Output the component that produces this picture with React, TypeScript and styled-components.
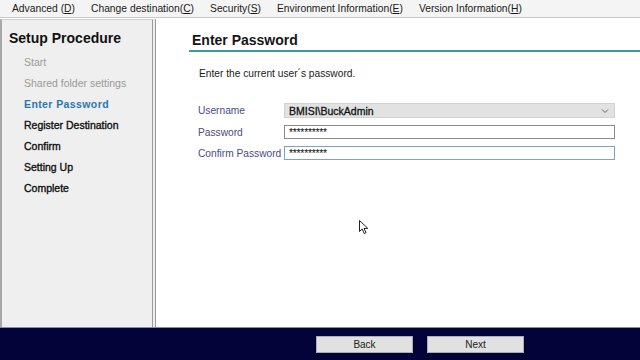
import styled, { createGlobalStyle } from 'styled-components';

const GlobalStyle = createGlobalStyle`
    html, body {
        margin: 0;
        padding: 0;
        background: #ffffff;
    }
    * {
        box-sizing: border-box;
    }
`;

const Window = styled.div`
    width: 640px;
    height: 360px;
    display: flex;
    flex-direction: column;
    font-family: 'Liberation Sans', Arial, sans-serif;
    overflow: hidden;
    position: relative;
    background: #ffffff;
`;

const MenuBar = styled.div`
    height: 18px;
    display: flex;
    align-items: center;
    background: #f4f4f4;
    border-bottom: 1px solid #c9c9c9;
    padding-left: 12px;
    gap: 16px;
    font-size: 10.3px;
    color: #1a1a1a;
`;

const MenuItem = styled.span`
    white-space: nowrap;
    u {
        text-decoration: underline;
    }
`;

const Body = styled.div`
    flex: 1;
    display: flex;
    padding-top: 1px;
    min-height: 0;
`;

const Sidebar = styled.div`
    width: 156px;
    background: #efefef;
    border-left: 2px solid #a8a8a8;
    border-top: 1px solid #d0d0d0;
    border-right: 4px double #9c9c9c;
    padding: 10px 0 0 7px;
    display: flex;
    flex-direction: column;
`;

const SideTitle = styled.div`
    font-size: 14px;
    line-height: 16px;
    font-weight: bold;
    color: #111;
    margin-bottom: 10px;
`;

const StepList = styled.ul`
    list-style: none;
    margin: 0;
    padding: 0 0 0 15px;
    display: flex;
    flex-direction: column;
    gap: 9px;
`;

const Step = styled.li<{ $state: 'done' | 'active' | 'todo' }>`
    font-size: 10.5px;
    line-height: 12px;
    white-space: nowrap;
    font-weight: ${(p) => (p.$state === 'active' ? 'bold' : 'normal')};
    letter-spacing: ${(p) => (p.$state === 'active' ? '0.4px' : '0')};
    -webkit-text-stroke: ${(p) => (p.$state === 'todo' ? '0.35px #111' : '0')};
    color: ${(p) => (p.$state === 'done' ? '#9a9a9a' : p.$state === 'active' ? '#2a78ad' : '#111')};
`;

const Main = styled.div`
    flex: 1;
    background: #ffffff;
    padding-top: 13px;
    display: flex;
    flex-direction: column;
`;

const MainHeader = styled.div`
    margin-left: 33px;
    padding: 0 0 2px 3px;
    border-bottom: 2px solid #3c9aa6;
    font-size: 14px;
    line-height: 16px;
    font-weight: bold;
    color: #151515;
`;

const Intro = styled.div`
    margin: 16px 0 0 43px;
    font-size: 10.2px;
    line-height: 12px;
    color: #1a1a1a;
`;

const Form = styled.div`
    margin: 23px 0 0 42px;
    display: grid;
    grid-template-columns: 86px 331px;
    row-gap: 7px;
    align-items: center;
`;

const Label = styled.label`
    font-size: 10.2px;
    color: #4b4b86;
`;

const Field = styled.div<{ $kind: 'select' | 'input' | 'focus' }>`
    height: ${(p) => (p.$kind === 'select' ? '15px' : '14px')};
    display: flex;
    align-items: center;
    justify-content: space-between;
    padding: 0 5px 0 4px;
    font-size: 10.5px;
    color: #111;
    -webkit-text-stroke: ${(p) => (p.$kind === 'select' ? '0.3px #111' : '0')};
    background: ${(p) => (p.$kind === 'select' ? '#e2e2e2' : '#ffffff')};
    border: 1px solid
        ${(p) => (p.$kind === 'select' ? '#d2d2d2' : p.$kind === 'focus' ? '#7aa3cc' : '#8a8a8a')};
    letter-spacing: ${(p) => (p.$kind === 'select' ? '0' : '-0.3px')};
`;

const Chevron = styled.svg`
    width: 8px;
    height: 6px;
`;

const Footer = styled.div`
    height: 33px;
    background: #03033a;
    border-top: 1px solid #8a8aa6;
    display: flex;
    align-items: center;
    gap: 14px;
    padding-left: 316px;
`;

const Button = styled.button`
    width: 97px;
    height: 17px;
    background: #e1e1e1;
    border: 1px solid #adadad;
    font-family: 'Liberation Sans', Arial, sans-serif;
    font-size: 10px;
    color: #222;
    padding: 0;
`;

const Cursor = styled.svg`
    position: absolute;
    left: 359px;
    top: 220px;
    width: 12px;
    height: 15px;
`;

const steps: { name: string; state: 'done' | 'active' | 'todo' }[] = [
    { name: 'Start', state: 'done' },
    { name: 'Shared folder settings', state: 'done' },
    { name: 'Enter Password', state: 'active' },
    { name: 'Register Destination', state: 'todo' },
    { name: 'Confirm', state: 'todo' },
    { name: 'Setting Up', state: 'todo' },
    { name: 'Complete', state: 'todo' },
];

const App = () => {
    return (
        <Window>
            <GlobalStyle />
            <MenuBar>
                <MenuItem>
                    Advanced (<u>D</u>)
                </MenuItem>
                <MenuItem>
                    Change destination(<u>C</u>)
                </MenuItem>
                <MenuItem>
                    Security(<u>S</u>)
                </MenuItem>
                <MenuItem>
                    Environment Information(<u>E</u>)
                </MenuItem>
                <MenuItem>
                    Version Information(<u>H</u>)
                </MenuItem>
            </MenuBar>
            <Body>
                <Sidebar>
                    <SideTitle>Setup Procedure</SideTitle>
                    <StepList>
                        {steps.map((s) => (
                            <Step key={s.name} $state={s.state}>
                                {s.name}
                            </Step>
                        ))}
                    </StepList>
                </Sidebar>
                <Main>
                    <MainHeader>Enter Password</MainHeader>
                    <Intro>Enter the current user´s password.</Intro>
                    <Form>
                        <Label>Username</Label>
                        <Field $kind="select">
                            <span>BMISI\BuckAdmin</span>
                            <Chevron viewBox="0 0 8 6">
                                <path d="M1 1.5 L4 4.5 L7 1.5" fill="none" stroke="#666" strokeWidth="1" />
                            </Chevron>
                        </Field>
                        <Label>Password</Label>
                        <Field $kind="input">**********</Field>
                        <Label>Confirm Password</Label>
                        <Field $kind="focus">**********</Field>
                    </Form>
                </Main>
            </Body>
            <Footer>
                <Button>Back</Button>
                <Button>Next</Button>
            </Footer>
            <Cursor viewBox="0 0 12 15">
                <path
                    d="M0.5 0.5 L0.5 11.5 L3.2 9 L5.2 13.5 L7 12.7 L5 8.4 L8.8 8.4 Z"
                    fill="#ffffff"
                    stroke="#222"
                    strokeWidth="1"
                    strokeLinejoin="round"
                />
            </Cursor>
        </Window>
    );
};

export default App;
